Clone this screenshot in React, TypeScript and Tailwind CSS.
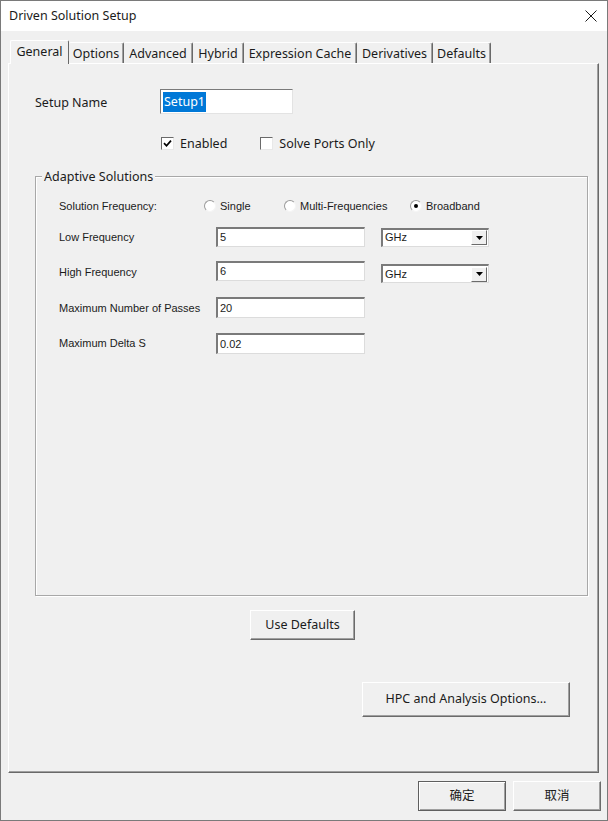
import React from "react";

const Tab = ({ label, w, active }: { label: string; w: number; active?: boolean }) => (
  <div
    className={
      active
        ? "relative z-10 h-[24px] -mb-[1px] flex items-center justify-center bg-[#f0f0f0] border-t border-l border-t-white border-l-white border-r border-r-[#696969] rounded-t-[2px]"
        : "h-[21px] flex items-center justify-center border-t border-t-white border-r border-r-[#696969] shadow-[inset_-1px_0_0_#a0a0a0] rounded-t-[2px] pt-[3px]"
    }
    style={{ width: w }}
  >
    {label}
  </div>
);

const Sunken = ({ w, h, children }: { w: number; h: number; children?: React.ReactNode }) => (
  <div
    className="bg-white border-t-2 border-l-2 border-t-[#7a7a7a] border-l-[#7a7a7a] border-r border-b border-r-[#dcdcdc] border-b-[#dcdcdc] flex items-center pl-[2px] text-[11px] font-['Liberation_Sans',sans-serif]"
    style={{ width: w, height: h }}
  >
    {children}
  </div>
);

const Combo = () => (
  <div className="w-[108px] h-[19px] bg-white border-t-2 border-l-2 border-t-[#7a7a7a] border-l-[#7a7a7a] border-r border-b border-r-[#dcdcdc] border-b-[#dcdcdc] flex items-center text-[11px] font-['Liberation_Sans',sans-serif]">
    <span className="pl-[2px] flex-1">GHz</span>
    <div className="w-[16px] h-[15px] bg-[#f0f0f0] border-t border-l border-t-white border-l-white border-r border-b border-r-[#6b6b6b] border-b-[#6b6b6b] flex items-center justify-center mr-[1px]">
      <svg width="7" height="4" viewBox="0 0 7 4">
        <path d="M0 0 H7 L3.5 4 Z" fill="#000" />
      </svg>
    </div>
  </div>
);

const Radio = ({ label, checked, w }: { label: string; checked?: boolean; w?: number }) => (
  <div className="flex items-center" style={w ? { width: w } : undefined}>
    <div className="w-[12px] h-[12px] rounded-full bg-white border border-t-[#9a9a9a] border-l-[#9a9a9a] border-r-[#f4f4f4] border-b-[#f4f4f4] flex items-center justify-center">
      {checked && <div className="w-[4px] h-[4px] rounded-full bg-black" />}
    </div>
    <span className="ml-[4px]">{label}</span>
  </div>
);

const Check = ({ checked }: { checked?: boolean }) => (
  <div className="w-[13px] h-[13px] bg-white border-t border-l border-t-[#6a6a6a] border-l-[#6a6a6a] border-r border-b border-r-[#e8e8e8] border-b-[#e8e8e8] flex items-center justify-center">
    {checked && (
      <svg width="9" height="9" viewBox="0 0 9 9">
        <path d="M1 4.2 L3.5 6.8 L8 1.6" stroke="#000" strokeWidth="1.7" fill="none" />
      </svg>
    )}
  </div>
);

const Button = ({ children, w, h, def }: { children: React.ReactNode; w: number; h: number; def?: boolean }) => (
  <div
    className={
      def
        ? "flex items-center justify-center bg-[#f0f0f0] border border-[#5f5f5f] shadow-[inset_1px_1px_0_#ffffff,inset_-1px_-1px_0_#a0a0a0]"
        : "flex items-center justify-center bg-[#f0f0f0] border-t border-l border-t-white border-l-white border-r border-b border-r-[#6b6b6b] border-b-[#6b6b6b] shadow-[inset_-1px_-1px_0_#a0a0a0]"
    }
    style={{ width: w, height: h }}
  >
    {children}
  </div>
);

export default function App() {
  return (
    <div className="w-[608px] h-[821px] bg-[#f0f0f0] border border-[#7a7a7a] flex flex-col text-[#1b1b1b] text-[12.5px] font-['Noto_Sans','Noto_Sans_CJK_SC',sans-serif] overflow-hidden">
      {/* title bar */}
      <div className="h-[30px] bg-white flex items-center pl-[8px] pr-[10px] shrink-0">
        <span>Driven Solution Setup</span>
        <svg className="ml-auto" width="12" height="12" viewBox="0 0 12 12">
          <path d="M0.5 0.5 L11.5 11.5 M11.5 0.5 L0.5 11.5" stroke="#1b1b1b" strokeWidth="1" />
        </svg>
      </div>

      {/* tabs */}
      <div className="h-[32px] flex items-end pl-[9px] shrink-0">
        <Tab label="General" w={59} active />
        <Tab label="Options" w={55} />
        <Tab label="Advanced" w={69} />
        <Tab label="Hybrid" w={51} />
        <Tab label="Expression Cache" w={113} />
        <Tab label="Derivatives" w={76} />
        <Tab label="Defaults" w={58} />
      </div>

      {/* panel */}
      <div className="ml-[7px] w-[591px] h-[710px] shrink-0 border-t border-l border-t-white border-l-white border-r border-b border-r-[#696969] border-b-[#696969] shadow-[inset_-1px_-1px_0_#a0a0a0] flex flex-col">
        {/* setup name */}
        <div className="mt-[25px] flex items-center h-[25px] pl-[26px]">
          <span className="w-[125px] pt-[3px]">Setup Name</span>
          <div className="w-[133px] h-[25px] bg-white border-t border-l border-t-[#7a7a7a] border-l-[#7a7a7a] border-r border-b border-r-[#e3e3e3] border-b-[#e3e3e3] flex items-center pl-[2px]">
            <span className="bg-[#0078d7] text-white leading-[20px] px-[1px]">Setup1</span>
          </div>
        </div>

        {/* checkboxes */}
        <div className="mt-[22px] h-[14px] flex items-center pl-[152px]">
          <Check checked />
          <span className="ml-[6px] pt-[2px]">Enabled</span>
          <div className="ml-[33px]">
            <Check />
          </div>
          <span className="ml-[6px] pt-[2px]">Solve Ports Only</span>
        </div>

        {/* group box */}
        <div className="relative mt-[26px] ml-[26px] w-[553px] h-[420px] border border-[#a8a8a8] shadow-[inset_1px_1px_0_#ffffff,1px_1px_0_#ffffff] flex flex-col text-[11px] font-['Liberation_Sans',sans-serif]">
          <span className="absolute -top-[9px] left-[6px] px-[2px] bg-[#f0f0f0] text-[12.5px] font-['Noto_Sans',sans-serif] leading-[18px]">
            Adaptive Solutions
          </span>
          <div className="mt-[20px] h-[18px] flex items-center pl-[23px]">
            <span className="w-[145px]">Solution Frequency:</span>
            <Radio label="Single" w={80} />
            <Radio label="Multi-Frequencies" w={126} />
            <Radio label="Broadband" checked />
          </div>
          <div className="mt-[12px] h-[20px] flex items-center pl-[23px]">
            <span className="w-[157px]">Low Frequency</span>
            <Sunken w={149} h={20}>5</Sunken>
            <div className="ml-[16px]">
              <Combo />
            </div>
          </div>
          <div className="mt-[14px] h-[22px] flex items-center pl-[23px]">
            <span className="w-[157px] pt-[1px]">High Frequency</span>
            <div className="self-start">
              <Sunken w={149} h={20}>6</Sunken>
            </div>
            <div className="ml-[16px] self-end">
              <Combo />
            </div>
          </div>
          <div className="mt-[14px] h-[21px] flex items-center pl-[23px]">
            <span className="w-[157px] pt-[1px]">Maximum Number of Passes</span>
            <Sunken w={149} h={21}>20</Sunken>
          </div>
          <div className="mt-[15px] h-[21px] flex items-center pl-[23px]">
            <span className="w-[157px]">Maximum Delta S</span>
            <Sunken w={149} h={21}>0.02</Sunken>
          </div>
        </div>

        <div className="mt-[14px] ml-[241px]">
          <Button w={105} h={30}>Use Defaults</Button>
        </div>
        <div className="mt-[42px] ml-[353px]">
          <Button w={208} h={35}>HPC and Analysis Options...</Button>
        </div>
      </div>

      {/* bottom buttons */}
      <div className="mt-[8px] flex justify-end gap-[7px] pr-[6px]">
        <Button w={88} h={30} def>确定</Button>
        <Button w={88} h={30}>取消</Button>
      </div>
    </div>
  );
}
